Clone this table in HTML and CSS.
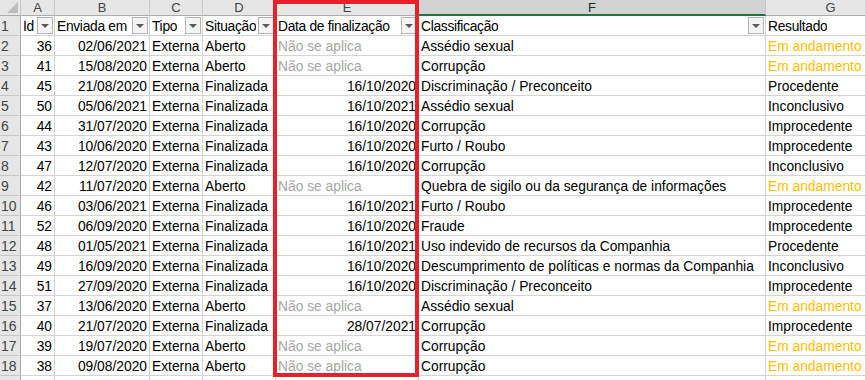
FILE: index.html
```html
<!DOCTYPE html>
<html lang="pt">
<head>
<meta charset="utf-8">
<title>Planilha</title>
<link rel="stylesheet" href="styles.css">
</head>
<body>
<div class="sheet">
  <div class="grid" id="grid">
    <div class="ch corner"><span class="corner-tri"></span></div>
    <div class="ch">A</div>
    <div class="ch">B</div>
    <div class="ch">C</div>
    <div class="ch">D</div>
    <div class="ch">E</div>
    <div class="ch sel">F</div>
    <div class="ch">G</div>

    <div class="rh">1</div>
    <div class="c hd"><span>Id</span><i class="fb"></i></div>
    <div class="c hd"><span>Enviada em</span><i class="fb"></i></div>
    <div class="c hd"><span>Tipo</span><i class="fb"></i></div>
    <div class="c hd"><span>Situação</span><i class="fb"></i></div>
    <div class="c hd"><span>Data de finalização</span><i class="fb"></i></div>
    <div class="c hd"><span>Classificação</span><i class="fb"></i></div>
    <div class="c hd"><span>Resultado</span><i class="fb"></i></div>

    <div class="rh">2</div><div class="c r">36</div><div class="c r">02/06/2021</div><div class="c">Externa</div><div class="c">Aberto</div><div class="c na">Não se aplica</div><div class="c">Assédio sexual</div><div class="c em">Em andamento</div>
    <div class="rh">3</div><div class="c r">41</div><div class="c r">15/08/2020</div><div class="c">Externa</div><div class="c">Aberto</div><div class="c na">Não se aplica</div><div class="c">Corrupção</div><div class="c em">Em andamento</div>
    <div class="rh">4</div><div class="c r">45</div><div class="c r">21/08/2020</div><div class="c">Externa</div><div class="c">Finalizada</div><div class="c r">16/10/2020</div><div class="c">Discriminação / Preconceito</div><div class="c">Procedente</div>
    <div class="rh">5</div><div class="c r">50</div><div class="c r">05/06/2021</div><div class="c">Externa</div><div class="c">Finalizada</div><div class="c r">16/10/2021</div><div class="c">Assédio sexual</div><div class="c">Inconclusivo</div>
    <div class="rh">6</div><div class="c r">44</div><div class="c r">31/07/2020</div><div class="c">Externa</div><div class="c">Finalizada</div><div class="c r">16/10/2020</div><div class="c">Corrupção</div><div class="c">Improcedente</div>
    <div class="rh">7</div><div class="c r">43</div><div class="c r">10/06/2020</div><div class="c">Externa</div><div class="c">Finalizada</div><div class="c r">16/10/2020</div><div class="c">Furto / Roubo</div><div class="c">Improcedente</div>
    <div class="rh">8</div><div class="c r">47</div><div class="c r">12/07/2020</div><div class="c">Externa</div><div class="c">Finalizada</div><div class="c r">16/10/2020</div><div class="c">Corrupção</div><div class="c">Inconclusivo</div>
    <div class="rh">9</div><div class="c r">42</div><div class="c r">11/07/2020</div><div class="c">Externa</div><div class="c">Aberto</div><div class="c na">Não se aplica</div><div class="c">Quebra de sigilo ou da segurança de informações</div><div class="c em">Em andamento</div>
    <div class="rh">10</div><div class="c r">46</div><div class="c r">03/06/2021</div><div class="c">Externa</div><div class="c">Finalizada</div><div class="c r">16/10/2021</div><div class="c">Furto / Roubo</div><div class="c">Improcedente</div>
    <div class="rh">11</div><div class="c r">52</div><div class="c r">06/09/2020</div><div class="c">Externa</div><div class="c">Finalizada</div><div class="c r">16/10/2020</div><div class="c">Fraude</div><div class="c">Improcedente</div>
    <div class="rh">12</div><div class="c r">48</div><div class="c r">01/05/2021</div><div class="c">Externa</div><div class="c">Finalizada</div><div class="c r">16/10/2021</div><div class="c">Uso indevido de recursos da Companhia</div><div class="c">Procedente</div>
    <div class="rh">13</div><div class="c r">49</div><div class="c r">16/09/2020</div><div class="c">Externa</div><div class="c">Finalizada</div><div class="c r">16/10/2020</div><div class="c">Descumprimento de políticas e normas da Companhia</div><div class="c">Inconclusivo</div>
    <div class="rh">14</div><div class="c r">51</div><div class="c r">27/09/2020</div><div class="c">Externa</div><div class="c">Finalizada</div><div class="c r">16/10/2020</div><div class="c">Discriminação / Preconceito</div><div class="c">Improcedente</div>
    <div class="rh">15</div><div class="c r">37</div><div class="c r">13/06/2020</div><div class="c">Externa</div><div class="c">Aberto</div><div class="c na">Não se aplica</div><div class="c">Assédio sexual</div><div class="c em">Em andamento</div>
    <div class="rh">16</div><div class="c r">40</div><div class="c r">21/07/2020</div><div class="c">Externa</div><div class="c">Finalizada</div><div class="c r">28/07/2021</div><div class="c">Corrupção</div><div class="c">Improcedente</div>
    <div class="rh">17</div><div class="c r">39</div><div class="c r">19/07/2020</div><div class="c">Externa</div><div class="c">Aberto</div><div class="c na">Não se aplica</div><div class="c">Corrupção</div><div class="c em">Em andamento</div>
    <div class="rh">18</div><div class="c r">38</div><div class="c r">09/08/2020</div><div class="c">Externa</div><div class="c">Aberto</div><div class="c na">Não se aplica</div><div class="c">Corrupção</div><div class="c em">Em andamento</div>
    <div class="rh"></div><div class="c"></div><div class="c"></div><div class="c"></div><div class="c"></div><div class="c"></div><div class="c"></div><div class="c"></div>
  </div>
  <div class="highlight"></div>
</div>
</body>
</html>
```

FILE: styles.css
```css
* { box-sizing: border-box; }
html, body {
  margin: 0;
  padding: 0;
  background: #ffffff;
  overflow: hidden;
}
body {
  width: 865px;
  height: 380px;
  font-family: "Liberation Sans", Arial, sans-serif;
  font-size: 13.8px;
  color: #000;
}
.sheet {
  position: relative;
  width: 865px;
  height: 380px;
  overflow: hidden;
}
.grid {
  display: grid;
  grid-template-columns: 21px 34px 95px 53px 73px 143px 347px 130px;
  grid-template-rows: 16px repeat(19, 20px);
}
.ch {
  background: #e6e6e6;
  border-right: 1px solid #c8c8c8;
  border-bottom: 1px solid #ababab;
  color: #444;
  font-size: 13px;
  line-height: 15px;
  text-align: center;
}
.ch.sel {
  background: #d2d2d2;
  border-bottom: 2px solid #217346;
  color: #262626;
}
.corner {
  position: relative;
}
.corner-tri {
  position: absolute;
  right: 2px;
  bottom: 2px;
  width: 0;
  height: 0;
  border-left: 11px solid transparent;
  border-bottom: 11px solid #bdbdbd;
}
.rh {
  background: #e6e6e6;
  border-right: 1px solid #ababab;
  border-bottom: 1px solid #c8c8c8;
  color: #444;
  font-size: 14px;
  line-height: 21px;
  padding-left: 1px;
  overflow: hidden;
  white-space: nowrap;
}
.c {
  border-right: 1px solid #d4d4d4;
  border-bottom: 1px solid #d4d4d4;
  padding: 0 2px 0 2px;
  line-height: 21px;
  white-space: nowrap;
  overflow: hidden;
}
.c.r { text-align: right; }
.c.na { color: #a6a6a6; }
.c.em { color: #ffc000; }
.c.hd {
  display: flex;
  align-items: flex-start;
  justify-content: space-between;
  gap: 2px;
  padding-right: 1px;
}
.c.hd span {
  overflow: hidden;
  letter-spacing: -0.3px;
}
.fb {
  flex: none;
  position: relative;
  width: 16px;
  height: 17px;
  margin-top: 1px;
  background: #f4f4f4;
  border: 1px solid #b4b4b4;
}
.fb::after {
  content: "";
  position: absolute;
  left: 3px;
  top: 6px;
  width: 0;
  height: 0;
  border-left: 4px solid transparent;
  border-right: 4px solid transparent;
  border-top: 4px solid #5a5a5a;
}
.highlight {
  position: absolute;
  left: 273px;
  top: 0;
  width: 146px;
  height: 377px;
  border: 4px solid #e8202a;
  pointer-events: none;
}
```
